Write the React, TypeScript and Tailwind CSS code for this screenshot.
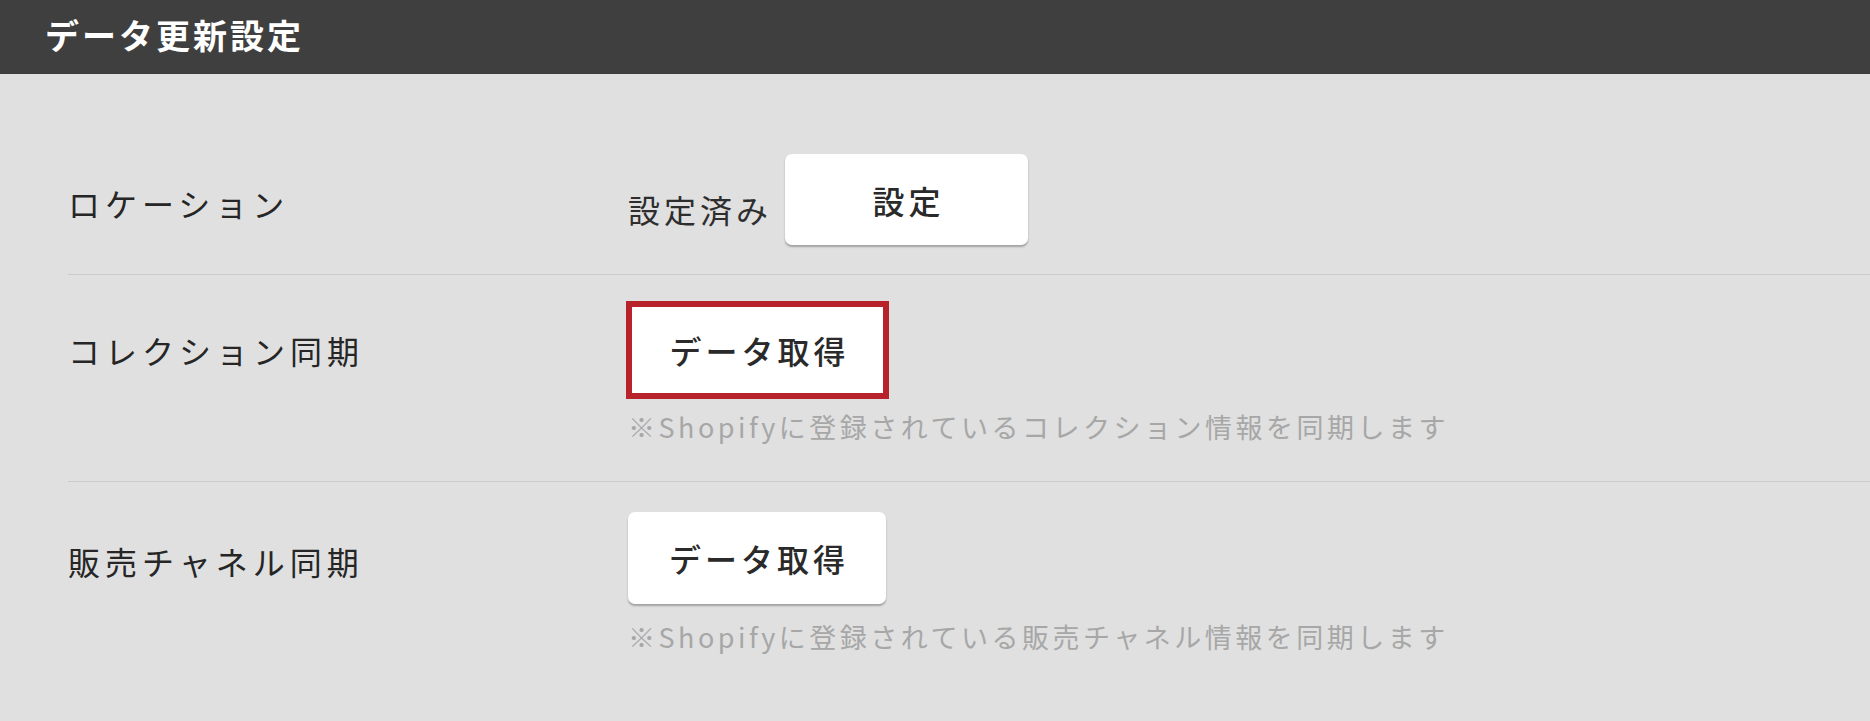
import type { ReactNode } from "react";

const jp = { fontFamily: '"Noto Sans CJK JP", "Noto Sans", sans-serif' };

function Row({ label, children, className }: { label: string; children: ReactNode; className: string }) {
  return (
    <div className={`flex border-b border-[#cbcbcb] ${className}`}>
      <div className="w-[560px] shrink-0 h-[92px] pt-[5px] flex items-center text-[32px] tracking-[5px] text-[#262626]">
        {label}
      </div>
      <div className="flex flex-col items-start">{children}</div>
    </div>
  );
}

function Note({ text, className }: { text: string; className: string }) {
  return <p className={`text-[27px] leading-[30px] tracking-[3.5px] text-[#a7a7a7] ${className}`}>{text}</p>;
}

export default function App() {
  return (
    <div style={jp} className="min-h-[721px] bg-[#e0e0e0]">
      <header className="h-[74px] bg-[#3f3f3f] pl-[45px] flex items-center">
        <h1 className="text-[34px] font-bold tracking-[3px] text-white leading-none -mt-[4px]">データ更新設定</h1>
      </header>

      <div className="pl-[68px] pt-[51px]">
        <Row label="ロケーション" className="pt-[29px] pb-[28px]">
          <div className="flex items-center gap-[13px] h-[91px]">
            <span className="text-[32px] tracking-[4px] text-[#2e2e2e] pt-[18px]">設定済み</span>
            <button className="w-[243px] h-[91px] bg-white rounded-[7px] shadow-[0_2px_2px_rgba(0,0,0,0.28)] text-[32px] font-medium tracking-[4px] text-[#2a2a2a] pl-[4px]">
              設定
            </button>
          </div>
        </Row>

        <Row label="コレクション同期" className="pt-[26px] pb-[39px]">
          <button className="-ml-[2px] w-[263px] h-[98px] bg-white border-[6px] border-[#b8222a] text-[32px] font-medium tracking-[4px] text-[#2a2a2a] pl-[4px]">
            データ取得
          </button>
          <Note className="mt-[13px]" text="※Shopifyに登録されているコレクション情報を同期します" />
        </Row>

        <div className="flex pt-[30px] pb-[68px]">
          <div className="w-[560px] shrink-0 h-[92px] pt-[6px] flex items-center text-[32px] tracking-[5px] text-[#262626]">
            販売チャネル同期
          </div>
          <div className="flex flex-col items-start">
            <button className="w-[258px] h-[92px] bg-white rounded-[7px] shadow-[0_2px_2px_rgba(0,0,0,0.28)] text-[32px] font-medium tracking-[4px] text-[#2a2a2a] pl-[4px]">
              データ取得
            </button>
            <Note className="mt-[18px]" text="※Shopifyに登録されている販売チャネル情報を同期します" />
          </div>
        </div>
      </div>
    </div>
  );
}
